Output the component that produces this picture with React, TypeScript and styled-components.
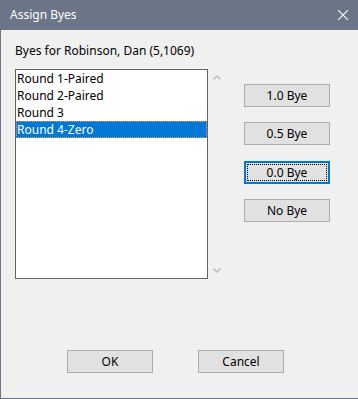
import React from "react";
import styled, { createGlobalStyle, css } from "styled-components";

const Global = createGlobalStyle`
  html, body { margin: 0; padding: 0; background: #f0f0f0; }
  * { box-sizing: border-box; }
`;

const FONT = `"Noto Sans", "Open Sans", "Liberation Sans", sans-serif`;

const Window = styled.div`
  width: 358px;
  height: 399px;
  background: #f0f0f0;
  border-left: 1px solid #6c7588;
  border-bottom: 1px solid #6c7588;
  display: flex;
  flex-direction: column;
  font-family: ${FONT};
  font-size: 12px;
  color: #000;
`;

const TitleBar = styled.div`
  height: 30px;
  flex: none;
  background: #6c7588;
  display: flex;
  align-items: center;
  justify-content: space-between;
  padding: 0 10px 0 9px;
  color: #fff;
`;

const Title = styled.span`
  font-size: 12px;
  line-height: 16px;
`;

const Body = styled.div`
  flex: 1;
  display: flex;
  flex-direction: column;
  padding: 13px 0 0 14px;
`;

const Label = styled.div`
  height: 16px;
  line-height: 16px;
`;

const MainRow = styled.div`
  margin-top: 10px;
  display: flex;
  height: 210px;
`;

const ListBox = styled.div`
  width: 193px;
  height: 210px;
  background: #fff;
  border: 1px solid #646464;
  display: flex;
  flex-direction: column;
`;

const Item = styled.div<{ $selected?: boolean }>`
  height: 17px;
  line-height: 15px;
  padding-left: 0;
  border: 1px solid transparent;
  white-space: nowrap;
  ${(p) =>
    p.$selected &&
    css`
      background: #0078d7;
      color: #fff;
      border: 1px dotted #f0a040;
    `}
`;

const ScrollCol = styled.div`
  width: 36px;
  display: flex;
  flex-direction: column;
  justify-content: space-between;
  padding: 6px 0 6px 5px;
`;

const ButtonCol = styled.div`
  display: flex;
  flex-direction: column;
  gap: 15px;
  padding-top: 15px;
`;

const Button = styled.div<{ $focused?: boolean; $extraTop?: boolean }>`
  position: relative;
  width: 86px;
  height: 23px;
  background: #e1e1e1;
  border: 1px solid #adadad;
  display: flex;
  align-items: center;
  justify-content: center;
  line-height: 16px;
  ${(p) => p.$extraTop && css`margin-top: 1px;`}
  ${(p) =>
    p.$focused &&
    css`
      border: 2px solid #0078d7;
      &::after {
        content: "";
        position: absolute;
        inset: 1px;
        border: 1px dotted #000;
      }
    `}
`;

const Footer = styled.div`
  margin-top: 71px;
  display: flex;
  gap: 45px;
  padding-left: 52px;
`;

const Chevron = ({ down }: { down?: boolean }) => (
  <svg width="8" height="5" viewBox="0 0 8 5">
    <path
      d={down ? "M0.5 0.5 L4 4 L7.5 0.5" : "M0.5 4.5 L4 1 L7.5 4.5"}
      fill="none"
      stroke="#c2c2c2"
      strokeWidth="1.6"
    />
  </svg>
);

const CloseIcon = () => (
  <svg width="10" height="10" viewBox="0 0 10 10">
    <path d="M0 0 L10 10 M10 0 L0 10" stroke="#fff" strokeWidth="1.1" />
  </svg>
);

const rounds = ["Round 1-Paired", "Round 2-Paired", "Round 3", "Round 4-Zero"];
const byes = ["1.0 Bye", "0.5 Bye", "0.0 Bye", "No Bye"];

export default function App() {
  return (
    <>
      <Global />
      <Window>
        <TitleBar>
          <Title>Assign Byes</Title>
          <CloseIcon />
        </TitleBar>
        <Body>
          <Label>Byes for Robinson, Dan (5,1069)</Label>
          <MainRow>
            <ListBox>
              {rounds.map((r, i) => (
                <Item key={r} $selected={i === 3}>
                  {r}
                </Item>
              ))}
            </ListBox>
            <ScrollCol>
              <Chevron />
              <Chevron down />
            </ScrollCol>
            <ButtonCol>
              {byes.map((b, i) => (
                <Button key={b} $focused={i === 2} $extraTop={i === 2}>
                  {b}
                </Button>
              ))}
            </ButtonCol>
          </MainRow>
          <Footer>
            <Button>OK</Button>
            <Button>Cancel</Button>
          </Footer>
        </Body>
      </Window>
    </>
  );
}
